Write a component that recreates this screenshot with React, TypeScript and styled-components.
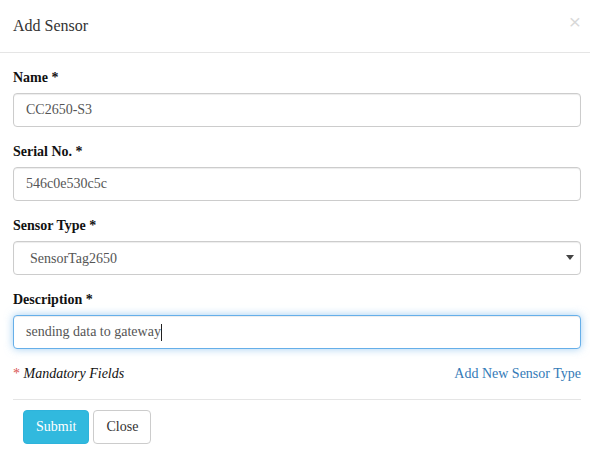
import styled, { createGlobalStyle } from 'styled-components';

const Global = createGlobalStyle`
  * { box-sizing: border-box; }
  body {
    margin: 0;
    background: #fff;
    font-family: "Liberation Serif", "Times New Roman", serif;
    font-size: 14px;
    line-height: 1.42857;
    color: #333;
  }
`

const Modal = styled.div`
  width: 590px;
  background: #fff;
`
const Header = styled.div`
  display: flex;
  align-items: flex-start;
  justify-content: space-between;
  padding: 15px 9px 15px 13px;
  border-bottom: 1px solid #e5e5e5;
`
const Title = styled.h4`
  margin: 0;
  font-size: 16px;
  font-weight: 400;
  line-height: 22px;
  color: #333;
`
const CloseX = styled.button`
  border: 0;
  background: none;
  padding: 0;
  margin-top: -4px;
  font-family: "Liberation Sans", Arial, sans-serif;
  font-size: 21px;
  font-weight: 400;
  line-height: 1;
  color: #000;
  opacity: 0.15;
  cursor: pointer;
`
const Body = styled.form`
  padding: 15px 9px 15px 13px;
`
const Group = styled.div`
  margin-bottom: 15px;
`
const Label = styled.label`
  display: block;
  margin-bottom: 5px;
  font-weight: 700;
  line-height: 20px;
  color: #111;
`
const Input = styled.input`
  display: block;
  width: 100%;
  height: 34px;
  padding: 6px 12px;
  font-family: inherit;
  font-size: 14px;
  color: #555;
  background: #fff;
  border: 1px solid #ccc;
  border-radius: 4px;
  box-shadow: inset 0 1px 1px rgba(0,0,0,.075);
  outline: none;
`
// focused field, drawn with its text caret
const FocusedInput = styled.div`
  display: flex;
  align-items: center;
  width: 100%;
  height: 34px;
  padding: 6px 12px;
  font-size: 14px;
  color: #555;
  background: #fff;
  border: 1px solid #66afe9;
  border-radius: 4px;
  box-shadow: inset 0 1px 1px rgba(0,0,0,.075), 0 0 8px rgba(102,175,233,.6);
`
const Caret = styled.span`
  display: inline-block;
  width: 1px;
  height: 17px;
  background: #222;
`
const SelectBox = styled.div`
  position: relative;
`
const Select = styled.select`
  display: block;
  width: 100%;
  height: 34px;
  padding: 6px 12px 6px 16px;
  font-family: inherit;
  font-size: 14px;
  color: #555;
  background: #fff;
  border: 1px solid #ccc;
  border-radius: 4px;
  box-shadow: inset 0 1px 1px rgba(0,0,0,.075);
  appearance: none;
  outline: none;
`
const Arrow = styled.svg`
  position: absolute;
  right: 7px;
  top: 14px;
  pointer-events: none;
`
const Notes = styled.div`
  display: flex;
  justify-content: space-between;
  line-height: 20px;
`
const Mandatory = styled.span`
  font-style: italic;
  color: #111;
`
const Star = styled.span`
  font-style: normal;
  color: #d9534f;
`
const Link = styled.a`
  color: #337ab7;
  text-decoration: none;
`
const Footer = styled.div`
  display: flex;
  gap: 4px;
  margin: 0 9px 0 13px;
  padding: 10px;
  border-top: 1px solid #e5e5e5;
`
const Button = styled.button<{ $primary?: boolean }>`
  height: 34px;
  padding: 6px 12px;
  font-family: inherit;
  font-size: 14px;
  line-height: 20px;
  border-radius: 4px;
  border: 1px solid ${p => (p.$primary ? '#2eb3db' : '#ccc')};
  background: ${p => (p.$primary ? '#31b9de' : '#fff')};
  color: ${p => (p.$primary ? '#fff' : '#333')};
  cursor: pointer;
`

export default function App() {
  return (
    <>
      <Global />
      <Modal>
        <Header>
          <Title>Add Sensor</Title>
          <CloseX type="button">×</CloseX>
        </Header>
        <Body>
          <Group>
            <Label>Name *</Label>
            <Input defaultValue="CC2650-S3" />
          </Group>
          <Group>
            <Label>Serial No. *</Label>
            <Input defaultValue="546c0e530c5c" />
          </Group>
          <Group>
            <Label>Sensor Type *</Label>
            <SelectBox>
              <Select defaultValue="SensorTag2650">
                <option>SensorTag2650</option>
              </Select>
              <Arrow width="8" height="5" viewBox="0 0 8 5">
                <path d="M0 0h8L4 5z" fill="#444" />
              </Arrow>
            </SelectBox>
          </Group>
          <Group>
            <Label>Description *</Label>
            <FocusedInput>
              sending data to gateway<Caret />
            </FocusedInput>
          </Group>
          <Notes>
            <Mandatory><Star>*</Star> Mandatory Fields</Mandatory>
            <Link href="#">Add New Sensor Type</Link>
          </Notes>
        </Body>
        <Footer>
          <Button type="button" $primary>Submit</Button>
          <Button type="button">Close</Button>
        </Footer>
      </Modal>
    </>
  );
}
